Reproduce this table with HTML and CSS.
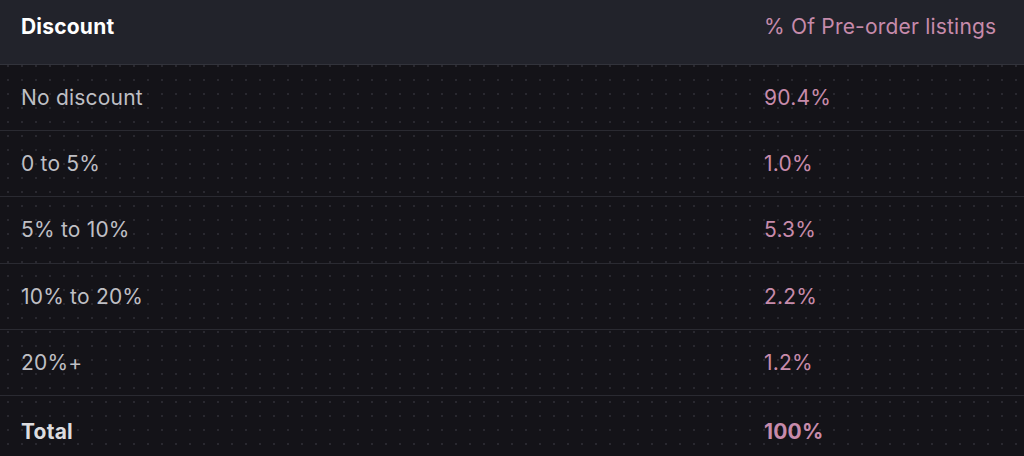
FILE: index.html
```html
<!DOCTYPE html>
<html>
<head>
  <title>Pre-order discounts</title>
  <link rel="stylesheet" href="styles.css">
</head>
<body>
  <table class="discount-table">
    <thead>
      <tr>
        <th class="col-label">Discount</th>
        <th class="col-value">% Of Pre-order listings</th>
      </tr>
    </thead>
    <tbody>
      <tr>
        <td class="col-label">No discount</td>
        <td class="col-value">90.4%</td>
      </tr>
      <tr>
        <td class="col-label">0 to 5%</td>
        <td class="col-value">1.0%</td>
      </tr>
      <tr>
        <td class="col-label">5% to 10%</td>
        <td class="col-value">5.3%</td>
      </tr>
      <tr>
        <td class="col-label">10% to 20%</td>
        <td class="col-value">2.2%</td>
      </tr>
      <tr>
        <td class="col-label">20%+</td>
        <td class="col-value">1.2%</td>
      </tr>
      <tr class="total">
        <td class="col-label">Total</td>
        <td class="col-value">100%</td>
      </tr>
    </tbody>
  </table>
</body>
</html>
```

FILE: styles.css
```css
body {
  margin: 0;
  padding: 0;
  font-family: Inter, "Noto Sans", sans-serif;
  background-color: #141318;
  background-image: radial-gradient(circle, #29282f 1px, transparent 1.4px);
  background-size: 14px 14px;
  background-position: 1px 3px;
}

.discount-table {
  width: 100%;
  border-collapse: collapse;
  font-size: 21px;
  letter-spacing: 0.2px;
}

.discount-table th {
  height: 64px;
  box-sizing: border-box;
  padding: 0 0 10px 0;
  background-color: #22232b;
  border-bottom: 1px solid #32333b;
  font-weight: 400;
  text-align: left;
}

.discount-table th.col-label {
  color: #ffffff;
  font-weight: 700;
}

.discount-table td {
  height: 65.4px;
  padding: 0;
  border-bottom: 1px solid #2a2a31;
  color: #bfbfc4;
}

.col-label {
  padding-left: 21px !important;
  width: 743px;
}

.col-value {
  color: #c78bab !important;
}

.discount-table tr.total td {
  border-bottom: none;
  font-weight: 700;
  padding-top: 2px;
}

.discount-table tr.total td.col-label {
  color: #dcdcdf;
}
```
